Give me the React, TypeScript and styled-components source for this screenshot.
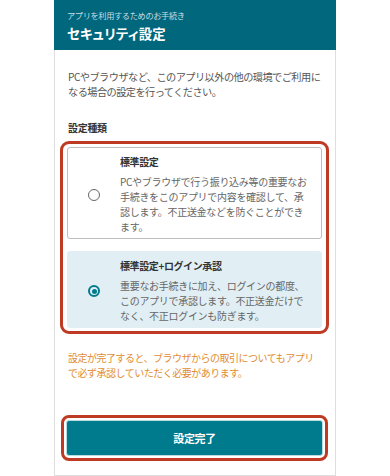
import { useState } from 'react';
import styled, { createGlobalStyle } from 'styled-components';

const GlobalStyle = createGlobalStyle`
    html, body {
        margin: 0;
        padding: 0;
        background: #fff;
    }
    body {
        font-family: "Noto Sans CJK JP", "Noto Sans", sans-serif;
        -webkit-font-smoothing: antialiased;
    }
`;

const Page = styled.div`
    display: flex;
    justify-content: center;
    min-height: 476px;
`;

const Card = styled.div`
    width: 282px;
    box-sizing: border-box;
    border: 1px solid #dedede;
    border-top: none;
    display: flex;
    flex-direction: column;
    background: #fff;
`;

const Header = styled.header`
    background: #00677d;
    height: 50px;
    box-sizing: border-box;
    padding: 10px 13px 0;
    margin: 0 -1px;
`;

const SubTitle = styled.div`
    font-size: 8.2px;
    line-height: 11px;
    letter-spacing: -0.35px;
    color: #c9dde3;
`;

const Title = styled.h1`
    margin: 3px 0 0;
    font-size: 13.4px;
    line-height: 18px;
    font-weight: 700;
    color: #fff;
    font-feature-settings: "palt";
    letter-spacing: 0.2px;
`;

const Body = styled.div`
    padding: 19px 13px 11px 12px;
    display: flex;
    flex-direction: column;
`;

const Lead = styled.p`
    margin: 0 0 0 1px;
    font-size: 10.2px;
    line-height: 15px;
    letter-spacing: -0.55px;
    color: #555;
`;

const SectionLabel = styled.div`
    margin: 22px 0 0 1px;
    font-size: 10px;
    line-height: 14px;
    letter-spacing: -0.3px;
    font-weight: 700;
    color: #333;
`;

const Highlight = styled.div`
    margin: 6px -7px 0;
    padding: 3px 4px;
    border: 3px solid #bf3a22;
    border-radius: 9px;
    display: flex;
    flex-direction: column;
    gap: 12px;
`;

const Option = styled.label<{ $selected: boolean }>`
    display: flex;
    align-items: center;
    gap: 20px;
    padding: 7px 10px 4px 20px;
    border-radius: 3px;
    border: 1px solid ${(p) => (p.$selected ? 'transparent' : '#bdbdbd')};
    background: ${(p) => (p.$selected ? '#e1eff4' : '#fff')};
    cursor: pointer;
`;

const Radio = styled.span<{ $checked: boolean }>`
    flex: 0 0 auto;
    width: 12px;
    height: 12px;
    box-sizing: border-box;
    border-radius: 50%;
    border: ${(p) => (p.$checked ? '2px solid #007b8e' : '1.5px solid #666')};
    display: flex;
    align-items: center;
    justify-content: center;
    &::after {
        content: '';
        display: ${(p) => (p.$checked ? 'block' : 'none')};
        width: 5px;
        height: 5px;
        border-radius: 50%;
        background: #007b8e;
    }
`;

const OptionText = styled.div`
    display: flex;
    flex-direction: column;
`;

const OptionTitle = styled.div`
    font-size: 10px;
    line-height: 14px;
    letter-spacing: -0.4px;
    font-weight: 700;
    color: #333;
`;

const OptionDesc = styled.div`
    margin-top: 5px;
    font-size: 10px;
    line-height: 15px;
    letter-spacing: -0.3px;
    color: #666;
`;

const Notice = styled.p`
    margin: 17px 0 0 1px;
    font-size: 10px;
    line-height: 14.5px;
    letter-spacing: -0.5px;
    color: #df8c34;
`;

const ButtonFrame = styled.div`
    margin: 35px -6px 0;
    padding: 2px;
    border: 3px solid #bf3a22;
    border-radius: 8px;
    display: flex;
`;

const SubmitButton = styled.button`
    flex: 1;
    height: 36px;
    border: 1px solid #b9dbe1;
    border-radius: 3px;
    background: #007b8e;
    color: #fff;
    font-family: inherit;
    font-size: 11px;
    letter-spacing: -0.4px;
    font-weight: 700;
    cursor: pointer;
`;

const options = [
    {
        id: 'standard',
        title: '標準設定',
        desc: 'PCやブラウザで行う振り込み等の重要なお手続きをこのアプリで内容を確認して、承認します。不正送金などを防ぐことができます。',
    },
    {
        id: 'login',
        title: '標準設定+ログイン承認',
        desc: '重要なお手続きに加え、ログインの都度、このアプリで承認します。不正送金だけでなく、不正ログインも防ぎます。',
    },
];

export default function App() {
    const [selected, setSelected] = useState('login');

    return (
        <Page>
            <GlobalStyle />
            <Card>
                <Header>
                    <SubTitle>アプリを利用するためのお手続き</SubTitle>
                    <Title>セキュリティ設定</Title>
                </Header>
                <Body>
                    <Lead>PCやブラウザなど、このアプリ以外の他の環境でご利用になる場合の設定を行ってください。</Lead>
                    <SectionLabel>設定種類</SectionLabel>
                    <Highlight>
                        {options.map((opt) => (
                            <Option key={opt.id} $selected={selected === opt.id} onClick={() => setSelected(opt.id)}>
                                <Radio $checked={selected === opt.id} />
                                <OptionText>
                                    <OptionTitle>{opt.title}</OptionTitle>
                                    <OptionDesc>{opt.desc}</OptionDesc>
                                </OptionText>
                            </Option>
                        ))}
                    </Highlight>
                    <Notice>設定が完了すると、ブラウザからの取引についてもアプリで必ず承認していただく必要があります。</Notice>
                    <ButtonFrame>
                        <SubmitButton>設定完了</SubmitButton>
                    </ButtonFrame>
                </Body>
            </Card>
        </Page>
    );
}
